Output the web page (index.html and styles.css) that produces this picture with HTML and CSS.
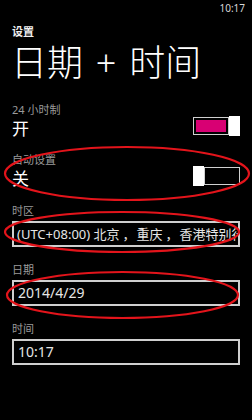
FILE: index.html
```html
<!DOCTYPE html>
<html lang="zh-CN">
<head>
<meta charset="utf-8">
<title>日期 + 时间</title>
<link rel="stylesheet" href="styles.css">
</head>
<body>
<div class="screen">
  <div class="status">10:17</div>
  <div class="header">
    <div class="app">设置</div>
    <div class="title">日期 + 时间</div>
  </div>

  <div class="setting first">
    <div class="label">24 小时制</div>
    <div class="row">
      <div class="value">开</div>
      <div class="toggle on">
        <div class="track"><div class="fill"></div></div>
        <div class="thumb"></div>
      </div>
    </div>
  </div>

  <div class="setting">
    <div class="label">自动设置</div>
    <div class="row">
      <div class="value">关</div>
      <div class="toggle off">
        <div class="thumb"></div>
        <div class="track"></div>
      </div>
    </div>
  </div>

  <div class="field first-field">
    <div class="label">时区</div>
    <div class="box zone">(UTC+08:00) 北京<span class="sep">，</span>重庆<span class="sep">，</span>香港特别行政区<span class="sep">，</span>乌鲁木齐</div>
  </div>

  <div class="field">
    <div class="label">日期</div>
    <div class="box">2014/4/29</div>
  </div>

  <div class="field">
    <div class="label">时间</div>
    <div class="box">10:17</div>
  </div>

  <svg class="marks" width="252" height="420" viewBox="0 0 252 420">
    <ellipse cx="127" cy="173.5" rx="122" ry="26.5"/>
    <ellipse cx="122" cy="232" rx="117" ry="20"/>
    <ellipse cx="122.5" cy="295" rx="115.5" ry="23"/>
  </svg>
</div>
</body>
</html>
```

FILE: styles.css
```css
html, body {
  margin: 0;
  padding: 0;
  background: #000;
}
.screen {
  position: relative;
  width: 252px;
  height: 420px;
  overflow: hidden;
  background: #000;
  color: #fff;
  font-family: "Noto Sans", "Noto Sans CJK SC", sans-serif;
  padding: 0 12px;
  box-sizing: border-box;
}
.status {
  height: 16px;
  line-height: 16px;
  font-size: 10px;
  text-align: right;
  color: #d8d8d8;
  margin-right: -5px;
}
.app {
  margin-top: 9px;
  font-size: 11px;
  line-height: 14px;
  font-weight: bold;
  color: #f0f0f0;
}
.title {
  margin-top: 4px;
  font-size: 36px;
  line-height: 40px;
  font-weight: 300;
  color: #fff;
  margin-left: -1px;
  word-spacing: 3.5px;
  white-space: nowrap;
}
.label {
  font-size: 11px;
  line-height: 12px;
  color: #9a9a9a;
}
.setting {
  margin-top: 15px;
}
.setting.first {
  margin-top: 21px;
}
.row {
  display: flex;
  justify-content: space-between;
  align-items: flex-start;
}
.value {
  margin-top: 3px;
  font-size: 17px;
  line-height: 20px;
  color: #fff;
}
.toggle {
  display: flex;
  align-items: center;
  width: 47px;
  height: 20px;
}
.track {
  flex: 1;
  height: 18px;
  border: 1px solid #d0d0d0;
  box-sizing: border-box;
  padding: 2px;
}
.fill {
  width: 100%;
  height: 100%;
  background: #d80073;
}
.thumb {
  width: 11px;
  height: 20px;
  background: #fff;
}
.field {
  margin-top: 17px;
}
.field.first-field {
  margin-top: 16px;
}
.field .label {
  margin-bottom: 4px;
}
.box {
  height: 26px;
  box-sizing: border-box;
  border: 2px solid #cfcfcf;
  padding: 0 3px 0 4px;
  font-size: 14px;
  line-height: 22px;
  color: #e6e6e6;
  white-space: nowrap;
  overflow: hidden;
}
.box.zone {
  font-size: 13px;
  padding-left: 3px;
}
.sep {
  margin: 0 1px 0 3px;
}
.marks {
  position: absolute;
  left: 0;
  top: 0;
  pointer-events: none;
}
.marks ellipse {
  fill: none;
  stroke: #e3141b;
  stroke-width: 2.2;
}
```
